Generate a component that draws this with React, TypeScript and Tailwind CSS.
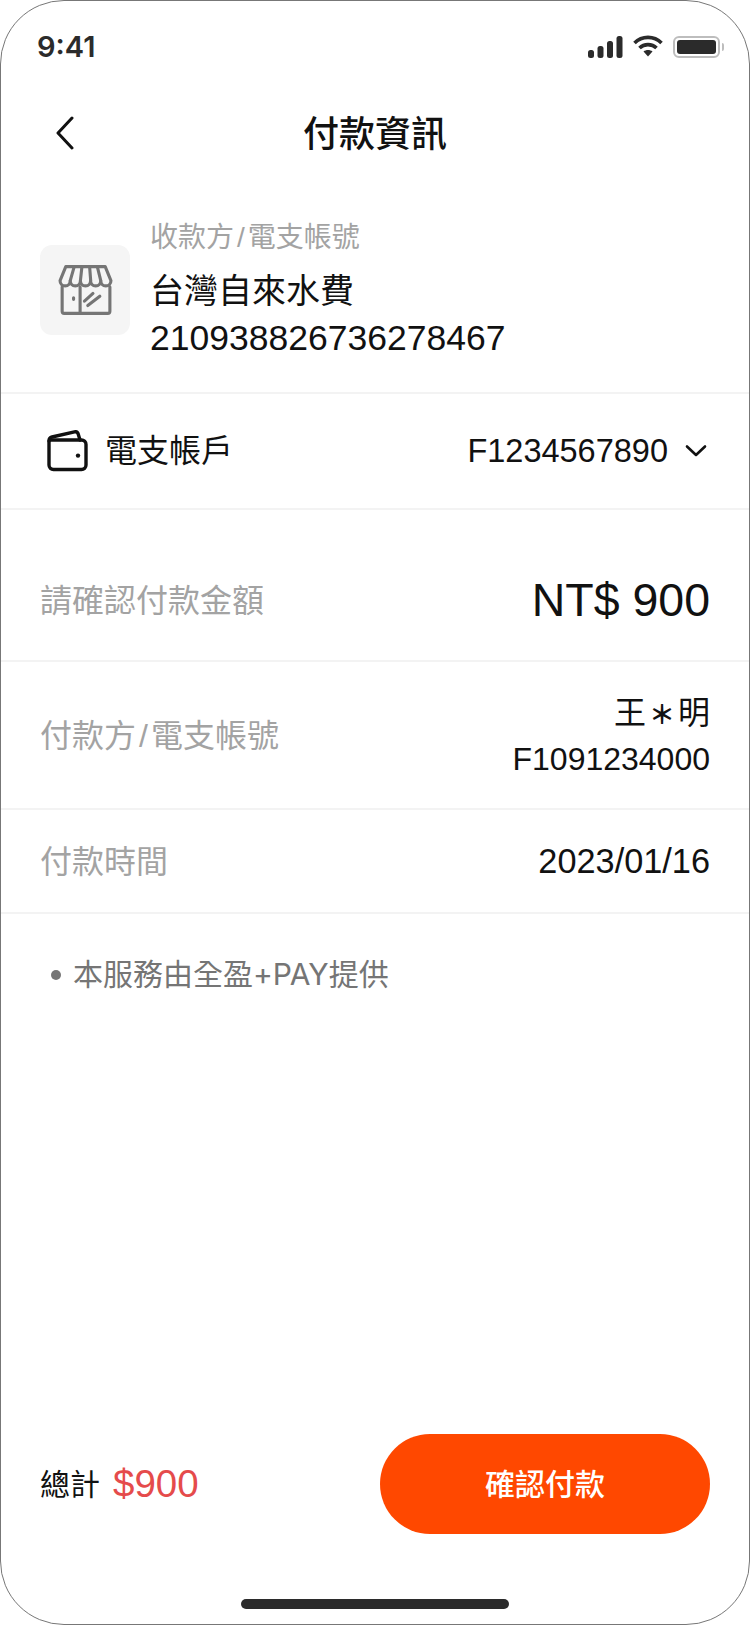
import React from "react";

const font = "font-['Liberation_Sans','Noto_Sans_CJK_TC',sans-serif]";

function Store() {
  return (
    <svg width="55" height="50" viewBox="0 0 53 48" fill="none" stroke="#757575" strokeWidth="3" strokeLinejoin="round" strokeLinecap="round">
      <path d="M7.500 1.500H45.500L51 15c0 3-2 5-4.900 5s-4.900-2-4.900-5c0 3-2 5-4.900 5s-4.900-2-4.900-5c0 3-2 5-4.900 5s-4.900-2-4.900-5c0 3-2 5-4.900 5s-4.900-2-4.900-5c0 3-2 5-4.900 5S2 18 2 15z" />
      <path d="M15.500 2l-3.700 13M23 2l-1.400 13M30.500 2l1 13M38 2l3.200 13" />
      <path d="M4 21v23.500a2 2 0 0 0 2 2h42a2 2 0 0 0 2-2V21M21.300 21v25" />
      <path d="M15 31.500v1.500M25.500 34.700l8.200-7.400M28.700 39l11.600-9" />
    </svg>
  );
}

function Wallet() {
  return (
    <svg width="42" height="42" viewBox="0 0 42 42" fill="none" stroke="#111" strokeWidth="3.400" strokeLinejoin="round" strokeLinecap="round">
      <path d="M2 11c0-2 1-3.500 3-4L27.500 1.800c2-.4 3.200.6 3.700 2.200L33 10" />
      <path d="M2 11v24a4.500 4.500 0 0 0 4.500 4.500h28a4.500 4.500 0 0 0 4.500-4.500V14.500a4.500 4.500 0 0 0-4.500-4.500H4" />
      <circle cx="31" cy="25.600" r="2.200" fill="#111" stroke="none" />
    </svg>
  );
}

function StatusIcons() {
  return (
    <div className="flex items-center gap-[10px]">
      <svg width="35" height="22" viewBox="0 0 35 22" fill="#2b2b2b">
        <rect x="0" y="14" width="6" height="8" rx="2.500" />
        <rect x="9.500" y="10" width="6" height="12" rx="2.500" />
        <rect x="19" y="5" width="6" height="17" rx="2.500" />
        <rect x="28.500" y="0" width="6" height="22" rx="2.500" />
      </svg>
      <svg width="30" height="23" viewBox="0 0 30 23" fill="none" stroke="#2b2b2b" strokeWidth="3.600">
        <path d="M1.500 8C9 .5 21 .5 28.500 8" />
        <path d="M6.500 13c4.500-4.500 12.500-4.500 17 0" />
        <path d="M10.500 16.500 15 21.500l4.500-5c-2.500-2-6.500-2-9 0z" fill="#2b2b2b" stroke="none" />
      </svg>
      <div className="flex items-center gap-[2px]">
        <div className="w-[47px] h-[22px] rounded-[6px] border-2 border-[#bdbdbd] p-[2px]">
          <div className="w-full h-full bg-[#2b2b2b] rounded-[3px]" />
        </div>
        <div className="w-[2px] h-[8px] bg-[#bdbdbd] rounded-r" />
      </div>
    </div>
  );
}

export default function App() {
  return (
    <div className={`${font} w-[750px] h-[1625px] bg-white border border-[#777777] rounded-[64px] flex flex-col text-[#111111] overflow-hidden`}>
      <div className="h-[92px] pl-[36px] pr-[25px] pt-[27px] flex items-start justify-between">
        <span className="font-['Inter'] text-[29px] leading-[38px] font-semibold text-[#2b2b2b]">9:41</span>
        <div className="pt-[7px]"><StatusIcons /></div>
      </div>

      <div className="relative h-[84px] flex items-center justify-center">
        <svg className="absolute left-[54px] top-[23px]" width="20" height="34" viewBox="0 0 20 34" fill="none" stroke="#111" strokeWidth="3" strokeLinecap="round" strokeLinejoin="round">
          <path d="M17 2 3 17l14 15" />
        </svg>
        <h1 className="text-[36px] font-medium leading-[48px] text-[#111111]">付款資訊</h1>
      </div>

      <div className="h-[217px] pl-[39px] pt-[10px] flex items-center gap-[20px] border-b-2 border-[#f3f3f3]">
        <div className="w-[90px] h-[90px] rounded-[12px] bg-[#f5f5f5] flex items-center justify-center">
          <Store />
        </div>
        <div className="flex flex-col -mt-[1px]">
          <span className="text-[28px] leading-[40px] text-[#a3a3a3]">收款方<span className="mx-[3px]">/</span>電支帳號</span>
          <span className="text-[34px] leading-[50px] mt-[8px]">台灣自來水費</span>
          <span className="text-[35.500px] leading-[44px]">210938826736278467</span>
        </div>
      </div>

      <div className="h-[116px] pl-[46px] pr-[42px] flex items-center justify-between border-b-2 border-[#f3f3f3]">
        <div className="flex items-center gap-[16px]">
          <Wallet />
          <span className="text-[32px] leading-[44px]">電支帳戶</span>
        </div>
        <div className="flex items-center gap-[17px]">
          <span className="text-[32.500px] leading-[44px]">F1234567890</span>
          <svg width="22" height="14" viewBox="0 0 22 14" fill="none" stroke="#111" strokeWidth="2.600" strokeLinecap="round" strokeLinejoin="round">
            <path d="M2 2.500 11 11l9-8.500" />
          </svg>
        </div>
      </div>

      <div className="h-[152px] pl-[39px] pr-[39px] pt-[31px] flex items-center justify-between border-b-2 border-[#f3f3f3]">
        <span className="text-[32px] text-[#a3a3a3]">請確認付款金額</span>
        <span className="text-[46.500px]">NT$ 900</span>
      </div>

      <div className="h-[148px] pl-[39px] pr-[39px] pt-[2px] flex items-center justify-between border-b-2 border-[#f3f3f3]">
        <span className="text-[32px] text-[#a3a3a3]">付款方<span className="mx-[3px]">/</span>電支帳號</span>
        <div className="flex flex-col items-end">
          <span className="text-[32px] leading-[44px]">王<span className="text-[26px] mx-[3px] font-bold">＊</span>明</span>
          <span className="text-[32px] leading-[44px]">F1091234000</span>
        </div>
      </div>

      <div className="h-[104px] pl-[39px] pr-[39px] pt-[2px] flex items-center justify-between border-b-2 border-[#f3f3f3]">
        <span className="text-[32px] text-[#a3a3a3]">付款時間</span>
        <span className="text-[34.300px]">2023/01/16</span>
      </div>

      <div className="pt-[38px] pl-[50px] flex items-center gap-[12px] text-[#757575]">
        <span className="w-[10px] h-[10px] rounded-full bg-[#757575]" />
        <span className="text-[30px] leading-[44px]">本服務由全盈<span className="font-['Inter']">+PAY</span>提供</span>
      </div>

      <div className="flex-1" />

      <div className="pl-[39px] pr-[39px] flex items-center justify-between">
        <div className="flex items-center gap-[13px]">
          <span className="text-[30px]">總計</span>
          <span className="text-[38.500px] text-[#e54b4b]">$900</span>
        </div>
        <button className="w-[330px] h-[100px] rounded-[50px] bg-[#ff4800] text-white text-[30px] font-medium">確認付款</button>
      </div>

      <div className="h-[90px] flex items-end justify-center pb-[15px]">
        <div className="w-[268px] h-[10px] rounded-full bg-[#2b2b2b]" />
      </div>
    </div>
  );
}
